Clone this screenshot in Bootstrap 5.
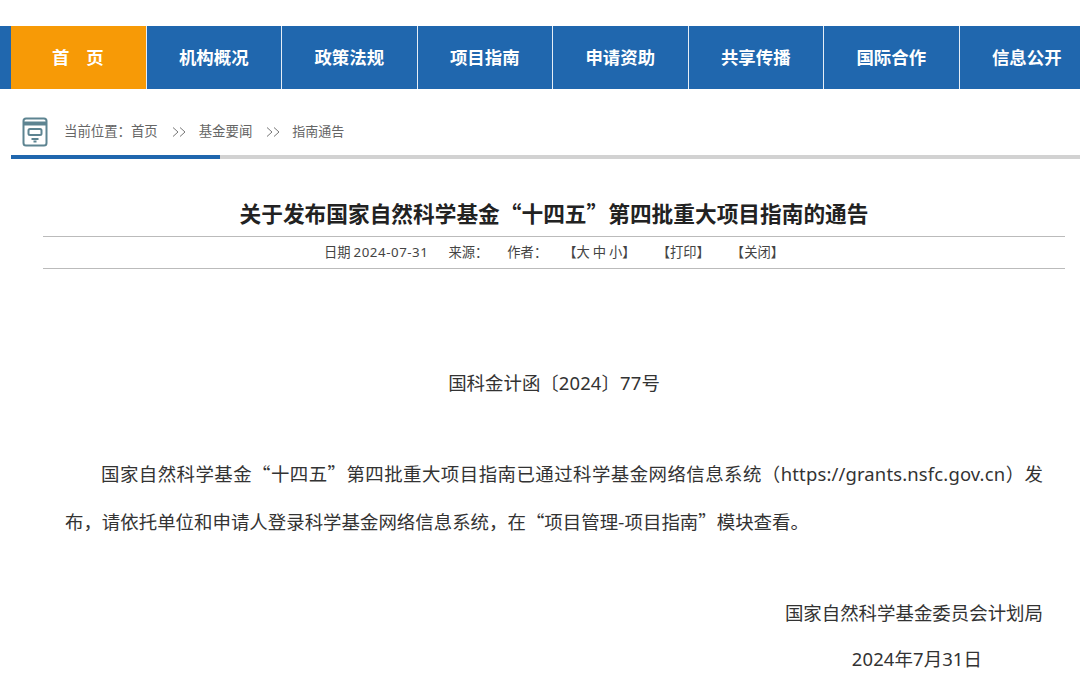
<!DOCTYPE html>
<html lang="zh-CN">
<head>
  <meta charset="UTF-8" />
  <meta name="viewport" content="width=device-width, initial-scale=1" />
  <title>关于发布国家自然科学基金“十四五”第四批重大项目指南的通告</title>
  <link href="https://cdn.jsdelivr.net/npm/bootstrap@5.3.3/dist/css/bootstrap.min.css" rel="stylesheet" />
  <style>
    html, body { height: 678px; overflow: hidden; }
    body {
      font-family: "Noto Sans CJK SC", "Noto Sans", sans-serif;
      color: #333;
      padding-top: 26px;
    }
    .lat { font-family: "Noto Sans", "Noto Sans CJK SC", sans-serif; line-height: 1; letter-spacing: .15px; }

    /* 顶部导航 */
    .top-nav { background: #2067ae; height: 63px; padding-left: 11px; }
    .top-nav a {
      flex: 0 0 135.5px;
      height: 63px;
      line-height: 61px;
      text-align: center;
      color: #fff;
      font-size: 17.4px;
      font-weight: 700;
      text-decoration: none;
      border-right: 1.5px solid #e6eef6;
    }
    .top-nav a.on { background: #f79a06; word-spacing: 13px; padding-right: 1px; }

    /* 当前位置 */
    .crumb-bar { height: 70px; margin-left: 11px; border-bottom: 4px solid #d2d2d2; position: relative; padding-left: 11px; }
    .crumb-bar::after {
      content: "";
      position: absolute;
      left: 0; bottom: -4px;
      width: 209px; height: 4px;
      background: #2067ae;
    }
    .crumb-icon { width: 26px; height: 30px; margin-top: 28px; flex: none; }
    .crumb-text { font-size: 13.4px; color: #666; margin: 32px 0 0 16px; line-height: 18px; }
    .crumb-sep { width: 14px; height: 10px; margin: 0 13px 0 14px; vertical-align: -1px; }
    .crumb-last { font-size: 13px; margin-left: -1px; }

    /* 正文 */
    .doc-wrap { margin-left: 43px; width: 1022px; }
    .doc-title { font-size: 21.7px; font-weight: 700; color: #222; text-align: center; margin: 40px 0 0; line-height: 28px; height: 37px; }
    .doc-meta { border-top: 1px solid #bbb; border-bottom: 1px solid #bbb; height: 33px; line-height: 29px; font-size: 13.3px; color: #444; }
    .doc-meta .lat { letter-spacing: .55px; }
    .meta-src { margin-left: 20px; }
    .meta-author { margin-left: 19px; }
    .meta-size { margin-left: 16px; }
    .meta-tool { margin-left: 21px; }
    .doc-body { width: 978px; margin-left: 22px; font-size: 18.45px; line-height: 48px; color: #333; }
    .doc-body p { margin: 0; }
    .doc-num { text-align: center; margin-top: 89px !important; }
    .doc-para { text-indent: 36px; margin-top: 43px !important; text-align: justify; }
    .doc-org { text-align: right; margin-top: 43px !important; }
    .doc-date { text-align: right; padding-right: 61px; margin-top: -2px !important; }
  </style>
</head>
<body>

  <!-- 导航 -->
  <nav class="top-nav d-flex overflow-hidden">
    <a class="on" href="#">首 页</a>
    <a href="#">机构概况</a>
    <a href="#">政策法规</a>
    <a href="#">项目指南</a>
    <a href="#">申请资助</a>
    <a href="#">共享传播</a>
    <a href="#">国际合作</a>
    <a href="#">信息公开</a>
  </nav>

  <!-- 当前位置 -->
  <div class="crumb-bar d-flex">
    <svg class="crumb-icon" viewBox="0 0 26 30" fill="none" stroke="#5d8491" stroke-width="2">
      <rect x="1.5" y="1.5" width="23" height="27" rx="2.5" />
      <path d="M1.5 6.5h23" stroke-width="4" />
      <rect x="6.5" y="12" width="13" height="6" rx="1.5" />
      <path d="M9.5 22h7M11.5 24.5h3" />
    </svg>
    <div class="crumb-text">当前位置：首页<svg class="crumb-sep" viewBox="0 0 14 10" fill="none" stroke="#777" stroke-width="1"><path d="M1 .5l5 4.5-5 4.5M8 .5l5 4.5-5 4.5" /></svg>基金要闻<svg class="crumb-sep" viewBox="0 0 14 10" fill="none" stroke="#777" stroke-width="1"><path d="M1 .5l5 4.5-5 4.5M8 .5l5 4.5-5 4.5" /></svg><span class="crumb-last">指南通告</span></div>
  </div>

  <!-- 正文 -->
  <div class="doc-wrap">
    <h1 class="doc-title">关于发布国家自然科学基金“十四五”第四批重大项目指南的通告</h1>
    <div class="doc-meta d-flex justify-content-center">
      <span>日期 <span class="lat">2024-07-31</span></span>
      <span class="meta-src">来源：</span>
      <span class="meta-author">作者：</span>
      <span class="meta-size">【大 中 小】</span>
      <span class="meta-tool">【打印】</span>
      <span class="meta-tool">【关闭】</span>
    </div>
    <div class="doc-body">
      <p class="doc-num">国科金计函〔<span class="lat">2024</span>〕<span class="lat">77</span>号</p>
      <p class="doc-para">国家自然科学基金“十四五”第四批重大项目指南已通过科学基金网络信息系统（<span class="lat">https://grants.nsfc.gov.cn</span>）发布，请依托单位和申请人登录科学基金网络信息系统，在“项目管理-项目指南”模块查看。</p>
      <p class="doc-org">国家自然科学基金委员会计划局</p>
      <p class="doc-date"><span class="lat">2024</span>年<span class="lat">7</span>月<span class="lat">31</span>日</p>
    </div>
  </div>

  <script src="https://cdn.jsdelivr.net/npm/bootstrap@5.3.3/dist/js/bootstrap.bundle.min.js"></script>
</body>
</html>
